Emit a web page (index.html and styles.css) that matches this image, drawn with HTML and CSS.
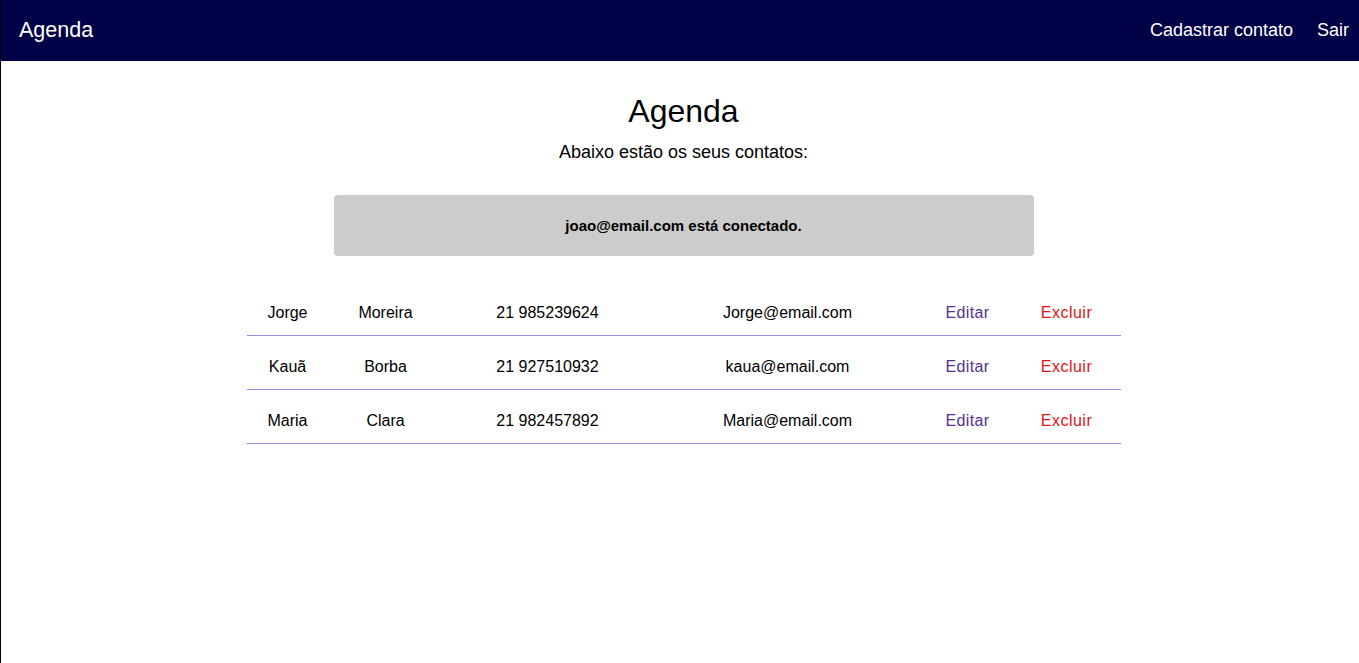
FILE: index.html
```html
<!DOCTYPE html>
<html lang="pt-BR">
<head>
<meta charset="utf-8">
<title>Agenda</title>
<link rel="stylesheet" href="styles.css">
</head>
<body>
<nav class="navbar">
  <a class="brand" href="#">Agenda</a>
  <div class="nav-links">
    <a href="#">Cadastrar contato</a>
    <a href="#">Sair</a>
  </div>
</nav>
<main class="content">
  <h1 class="title">Agenda</h1>
  <p class="subtitle">Abaixo estão os seus contatos:</p>
  <div class="alert">joao@email.com está conectado.</div>
  <table class="contacts">
    <colgroup>
      <col class="c1"><col class="c2"><col class="c3"><col class="c4"><col class="c5"><col class="c6">
    </colgroup>
    <tbody>
      <tr>
        <td>Jorge</td><td>Moreira</td><td>21 985239624</td><td>Jorge@email.com</td>
        <td><a class="edit" href="#">Editar</a></td><td><a class="delete" href="#">Excluir</a></td>
      </tr>
      <tr>
        <td>Kauã</td><td>Borba</td><td>21 927510932</td><td>kaua@email.com</td>
        <td><a class="edit" href="#">Editar</a></td><td><a class="delete" href="#">Excluir</a></td>
      </tr>
      <tr>
        <td>Maria</td><td>Clara</td><td>21 982457892</td><td>Maria@email.com</td>
        <td><a class="edit" href="#">Editar</a></td><td><a class="delete" href="#">Excluir</a></td>
      </tr>
    </tbody>
  </table>
</main>
</body>
</html>
```
FILE: styles.css
```css
html, body {
  margin: 0;
  padding: 0;
  background: #fff;
}
body {
  font-family: "Liberation Sans", Arial, sans-serif;
  color: #000;
  border-left: 1px solid #000;
  min-height: 663px;
  box-sizing: border-box;
}
.navbar {
  height: 61px;
  background: #000046;
  display: flex;
  align-items: center;
  justify-content: space-between;
  padding: 0 10px 0 18px;
  box-sizing: border-box;
}
.brand {
  color: #fff;
  text-decoration: none;
  font-size: 21.5px;
}
.nav-links {
  display: flex;
  gap: 24px;
}
.nav-links a {
  color: #fff;
  text-decoration: none;
  font-size: 18px;
}
.content {
  padding-left: 7px;
  display: flex;
  flex-direction: column;
  align-items: center;
}
.title {
  font-size: 32px;
  font-weight: normal;
  margin: 32px 0 0;
  line-height: 37px;
}
.subtitle {
  font-size: 18px;
  margin: 12px 0 0;
  line-height: 21px;
}
.alert {
  margin-top: 32px;
  width: 700px;
  height: 61px;
  background: #cccccc;
  border-radius: 4px;
  display: flex;
  align-items: center;
  justify-content: center;
  font-weight: bold;
  font-size: 15px;
}
.contacts {
  margin-top: 26px;
  width: 874px;
  border-collapse: collapse;
  table-layout: fixed;
  font-size: 16px;
}
.c1 { width: 82px; }
.c2 { width: 114px; }
.c3 { width: 210px; }
.c4 { width: 270px; }
.c5 { width: 90px; }
.c6 { width: 108px; }
.contacts td {
  text-align: center;
  padding: 22px 0 13px;
  line-height: 18px;
  border-bottom: 1px solid #9393e6;
}
.edit {
  color: #56308f;
  text-decoration: none;
  letter-spacing: 0.4px;
}
.delete {
  color: #e01414;
  text-decoration: none;
  letter-spacing: 0.5px;
}
```
